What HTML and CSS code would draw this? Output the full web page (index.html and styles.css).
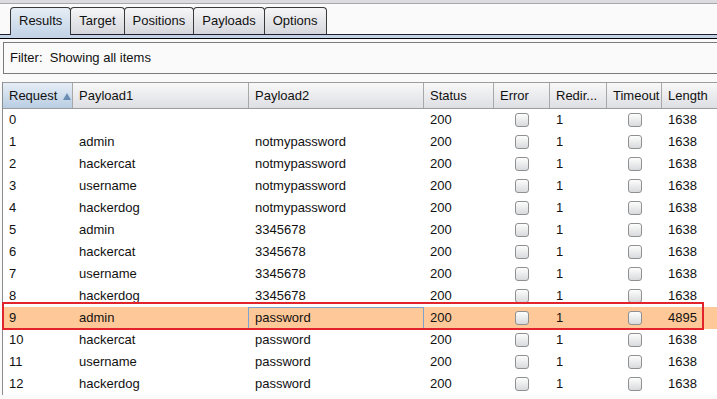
FILE: index.html
```html
<!DOCTYPE html>
<html lang="en">
<head>
  <meta charset="UTF-8" />
  <title>Intruder results</title>
  <link rel="stylesheet" href="styles.css">
</head>
<body>
  <div class="topbar"></div>

  <!-- Tabs -->
  <div class="tabs">
    <div class="tab active">Results</div>
    <div class="tab">Target</div>
    <div class="tab">Positions</div>
    <div class="tab">Payloads</div>
    <div class="tab">Options</div>
  </div>
  <div class="tabline"></div>

  <!-- Filter -->
  <div class="filter">Filter:&nbsp; Showing all items</div>

  <!-- Results table -->
  <div class="results">
    <div class="row head">
      <div class="cell sorted">Request <svg class="arrow" width="8" height="7" viewBox="0 0 8 7"><path d="M4 0 L8 7 L0 7 Z" fill="#6a8db4"/></svg></div>
      <div class="cell">Payload1</div>
      <div class="cell">Payload2</div>
      <div class="cell">Status</div>
      <div class="cell">Error</div>
      <div class="cell">Redir...</div>
      <div class="cell">Timeout</div>
      <div class="cell">Length</div>
    </div>

    <div class="row"><div class="cell">0</div><div class="cell"></div><div class="cell"></div><div class="cell">200</div><div class="cell check"><span class="box"></span></div><div class="cell">1</div><div class="cell check"><span class="box"></span></div><div class="cell">1638</div></div>
    <div class="row"><div class="cell">1</div><div class="cell">admin</div><div class="cell">notmypassword</div><div class="cell">200</div><div class="cell check"><span class="box"></span></div><div class="cell">1</div><div class="cell check"><span class="box"></span></div><div class="cell">1638</div></div>
    <div class="row"><div class="cell">2</div><div class="cell">hackercat</div><div class="cell">notmypassword</div><div class="cell">200</div><div class="cell check"><span class="box"></span></div><div class="cell">1</div><div class="cell check"><span class="box"></span></div><div class="cell">1638</div></div>
    <div class="row"><div class="cell">3</div><div class="cell">username</div><div class="cell">notmypassword</div><div class="cell">200</div><div class="cell check"><span class="box"></span></div><div class="cell">1</div><div class="cell check"><span class="box"></span></div><div class="cell">1638</div></div>
    <div class="row"><div class="cell">4</div><div class="cell">hackerdog</div><div class="cell">notmypassword</div><div class="cell">200</div><div class="cell check"><span class="box"></span></div><div class="cell">1</div><div class="cell check"><span class="box"></span></div><div class="cell">1638</div></div>
    <div class="row"><div class="cell">5</div><div class="cell">admin</div><div class="cell">3345678</div><div class="cell">200</div><div class="cell check"><span class="box"></span></div><div class="cell">1</div><div class="cell check"><span class="box"></span></div><div class="cell">1638</div></div>
    <div class="row"><div class="cell">6</div><div class="cell">hackercat</div><div class="cell">3345678</div><div class="cell">200</div><div class="cell check"><span class="box"></span></div><div class="cell">1</div><div class="cell check"><span class="box"></span></div><div class="cell">1638</div></div>
    <div class="row"><div class="cell">7</div><div class="cell">username</div><div class="cell">3345678</div><div class="cell">200</div><div class="cell check"><span class="box"></span></div><div class="cell">1</div><div class="cell check"><span class="box"></span></div><div class="cell">1638</div></div>
    <div class="row"><div class="cell">8</div><div class="cell">hackerdog</div><div class="cell">3345678</div><div class="cell">200</div><div class="cell check"><span class="box"></span></div><div class="cell">1</div><div class="cell check"><span class="box"></span></div><div class="cell">1638</div></div>
    <div class="row selected"><div class="cell">9</div><div class="cell">admin</div><div class="cell focus">password</div><div class="cell">200</div><div class="cell check"><span class="box"></span></div><div class="cell">1</div><div class="cell check"><span class="box"></span></div><div class="cell">4895</div></div>
    <div class="row"><div class="cell">10</div><div class="cell">hackercat</div><div class="cell">password</div><div class="cell">200</div><div class="cell check"><span class="box"></span></div><div class="cell">1</div><div class="cell check"><span class="box"></span></div><div class="cell">1638</div></div>
    <div class="row"><div class="cell">11</div><div class="cell">username</div><div class="cell">password</div><div class="cell">200</div><div class="cell check"><span class="box"></span></div><div class="cell">1</div><div class="cell check"><span class="box"></span></div><div class="cell">1638</div></div>
    <div class="row"><div class="cell">12</div><div class="cell">hackerdog</div><div class="cell">password</div><div class="cell">200</div><div class="cell check"><span class="box"></span></div><div class="cell">1</div><div class="cell check"><span class="box"></span></div><div class="cell">1638</div></div>

    <!-- annotation around the interesting row -->
    <div class="mark"></div>
  </div>
</body>
</html>
```

FILE: styles.css
```css
body {
  margin: 0;
  background: #fafafa;
  font-family: 'Liberation Sans', Arial, sans-serif;
  font-size: 13px;
  color: #111;
  overflow: hidden;
}

.topbar {
  height: 3px;
  background: #dcdce0;
  border-bottom: 1px solid #a8a8ac;
}

/* Tabs */
.tabs {
  display: flex;
  align-items: flex-end;
  margin-top: 3px;
  padding-left: 10px;
  height: 27px;
}

.tab {
  height: 26px;
  line-height: 26px;
  padding: 0 8px;
  border: 1px solid #3a3a3a;
  border-bottom: none;
  border-radius: 4px 4px 0 0;
  margin-left: -1px;
  background: linear-gradient(#f6f6f8, #d6d7dc);
  color: #111;
}

.tab:first-child {
  margin-left: 0;
}

.tab.active {
  position: relative;
  z-index: 1;
  height: 27px;
  margin-bottom: -1px;
  background: linear-gradient(#e6edf5, #c4d5e7);
}

.tabline {
  height: 3px;
  background: #c4d4e6;
  border-top: 1px solid #1e2030;
  border-bottom: 1px solid #000;
}

/* Filter */
.filter {
  margin: 3px 0 0 3px;
  height: 30px;
  line-height: 30px;
  padding-left: 6px;
  border: 1px solid #7a7a7a;
  border-right: none;
  background: #fafafa;
}

/* Results table */
.results {
  position: relative;
  margin: 8px 0 0 2px;
  border-left: 1px solid #8c8c8c;
  width: 740px;
  background: #fff;
}

.row {
  display: grid;
  grid-template-columns: 70px 176px 175px 70px 56px 57px 55px 80px;
  height: 22px;
  line-height: 22px;
}

.cell {
  padding-left: 6px;
  white-space: nowrap;
  overflow: hidden;
}

.head {
  height: 25px;
  line-height: 25px;
  border-top: 1px solid #9c9c9c;
  border-bottom: 1px solid #9c9c9c;
  background: linear-gradient(#f8f8f8, #dedfe4);
}

.head .cell {
  border-right: 1px solid #a8a8a8;
}

.head .cell.sorted {
  background: linear-gradient(#e6eef7, #b9cde2);
}

.arrow {
  margin-left: 2px;
  vertical-align: 0;
}

.cell.check {
  display: flex;
  align-items: center;
  justify-content: center;
  padding-left: 0;
}

.box {
  width: 12px;
  height: 12px;
  border: 1px solid #8e9092;
  border-radius: 3px;
  background: linear-gradient(#fdfdfd, #d9dadc);
}

.row.selected {
  background: #ffc898;
}

.cell.focus {
  border: 1px solid #7ea2cc;
  margin-left: -1px;
  line-height: 20px;
}

.mark {
  position: absolute;
  left: -1px;
  top: 220px;
  width: 698px;
  height: 24px;
  border: 2px solid #e3232c;
}
```
